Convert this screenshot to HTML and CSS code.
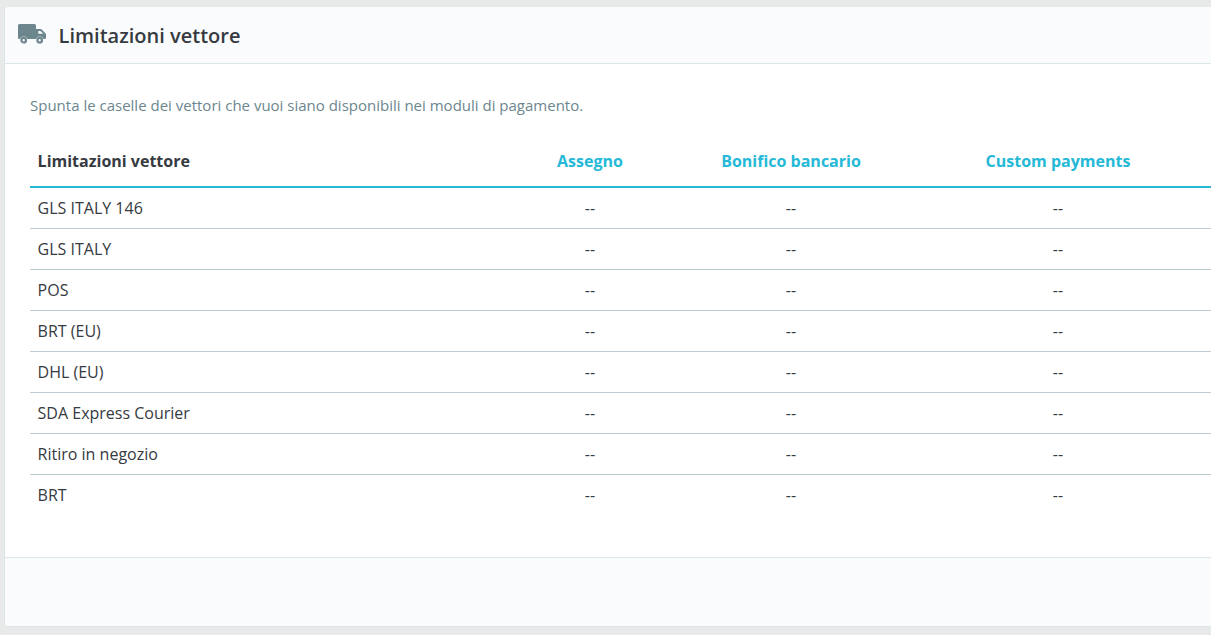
FILE: index.html
```html
<!DOCTYPE html>
<html lang="it">
<head>
<meta charset="utf-8">
<title>Limitazioni vettore</title>
<link rel="stylesheet" href="styles.css">
</head>
<body>
<section class="card">
  <header class="card-header">
    <svg class="truck" viewBox="0 0 28 20" width="28" height="20" aria-hidden="true">
      <path fill="#6c868e" d="M1.500 0h15a1.500 1.500 0 0 1 1.500 1.500V5h4.600c.4 0 .8.200 1.100.5l3.900 4c.3.300.4.600.4 1V13.500a2 2 0 0 1-.8 1.500H.8A1.600 1.600 0 0 1 0 13.500V1.500A1.500 1.500 0 0 1 1.500 0z"/>
      <path fill="#fafbfc" d="M20.300 7v2.800h5L22.300 7z"/>
      <circle cx="5.700" cy="16.200" r="3.800" fill="#fafbfc"/>
      <circle cx="21.700" cy="16.200" r="3.800" fill="#fafbfc"/>
      <circle cx="5.700" cy="16.200" r="2.300" fill="#fafbfc" stroke="#6c868e" stroke-width="2.200"/>
      <circle cx="21.700" cy="16.200" r="2.300" fill="#fafbfc" stroke="#6c868e" stroke-width="2.200"/>
    </svg>
    <h1 class="card-title">Limitazioni vettore</h1>
  </header>
  <div class="card-body">
    <p class="hint">Spunta le caselle dei vettori che vuoi siano disponibili nei moduli di pagamento.</p>
    <table class="limits">
      <colgroup>
        <col class="col-name"><col class="col-a"><col class="col-b"><col class="col-c">
      </colgroup>
      <thead>
        <tr><th class="name">Limitazioni vettore</th><th>Assegno</th><th>Bonifico bancario</th><th>Custom payments</th></tr>
      </thead>
      <tbody>
        <tr><td class="name">GLS ITALY 146</td><td>--</td><td>--</td><td>--</td></tr>
        <tr><td class="name">GLS ITALY</td><td>--</td><td>--</td><td>--</td></tr>
        <tr><td class="name">POS</td><td>--</td><td>--</td><td>--</td></tr>
        <tr><td class="name">BRT (EU)</td><td>--</td><td>--</td><td>--</td></tr>
        <tr><td class="name">DHL (EU)</td><td>--</td><td>--</td><td>--</td></tr>
        <tr><td class="name">SDA Express Courier</td><td>--</td><td>--</td><td>--</td></tr>
        <tr><td class="name">Ritiro in negozio</td><td>--</td><td>--</td><td>--</td></tr>
        <tr><td class="name">BRT</td><td>--</td><td>--</td><td>--</td></tr>
      </tbody>
    </table>
  </div>
  <footer class="card-footer"></footer>
</section>
</body>
</html>
```
FILE: styles.css
```css
html, body {
  margin: 0;
  height: 100%;
  overflow: hidden;
}
body {
  background: #e8eaea;
  padding: 7px 0 0 5px;
  box-sizing: border-box;
  font-family: "Open Sans", sans-serif;
  font-size: 16px;
  color: #363a41;
}
.card {
  background: #fff;
  border-radius: 4px 0 0 4px;
  box-shadow: -1px 0 0 #dbe6e9, 0 1px 0 #dbe6e9;
  display: flex;
  flex-direction: column;
}
.card-header {
  height: 57px;
  box-sizing: border-box;
  background: #fafbfc;
  border-bottom: 1px solid #dbe6e9;
  display: flex;
  align-items: center;
  gap: 12.600px;
  padding: 0 0 0 13px;
  border-radius: 4px 0 0 0;
}
.truck {
  flex: none;
  margin-top: -2px;
}
.card-title {
  margin: 2px 0 0;
  font-size: 20px;
  font-weight: 600;
  line-height: 26px;
  color: #363a41;
}
.card-body {
  padding: 31px 0 42px 25px;
}
.hint {
  margin: 0;
  color: #6c868e;
  line-height: 20px;
  font-size: 15px;
}
.limits {
  margin-top: 22px;
  width: 1181px;
  table-layout: fixed;
  border-collapse: collapse;
}
.col-name { width: 473px; }
.col-a { width: 174px; }
.col-b { width: 228px; }
.col-c { width: 306px; }
.limits th {
  height: 50px;
  box-sizing: border-box;
  padding: 0 8px 1px;
  font-weight: 700;
  text-align: center;
  color: #25b9d7;
  border-bottom: 2px solid #25b9d7;
}
.limits th.name {
  color: #363a41;
  text-align: left;
  padding-left: 7.600px;
}
.limits td {
  height: 41px;
  box-sizing: border-box;
  padding: 0 8px;
  text-align: center;
  border-bottom: 1px solid #bbcdd2;
}
.limits td.name {
  text-align: left;
  padding-left: 7.600px;
}
.limits tbody tr:last-child td {
  border-bottom: 0;
}
.card-footer {
  height: 69px;
  box-sizing: border-box;
  background: #fafbfc;
  border-top: 1px solid #dbe6e9;
  border-radius: 0 0 0 4px;
}
```
